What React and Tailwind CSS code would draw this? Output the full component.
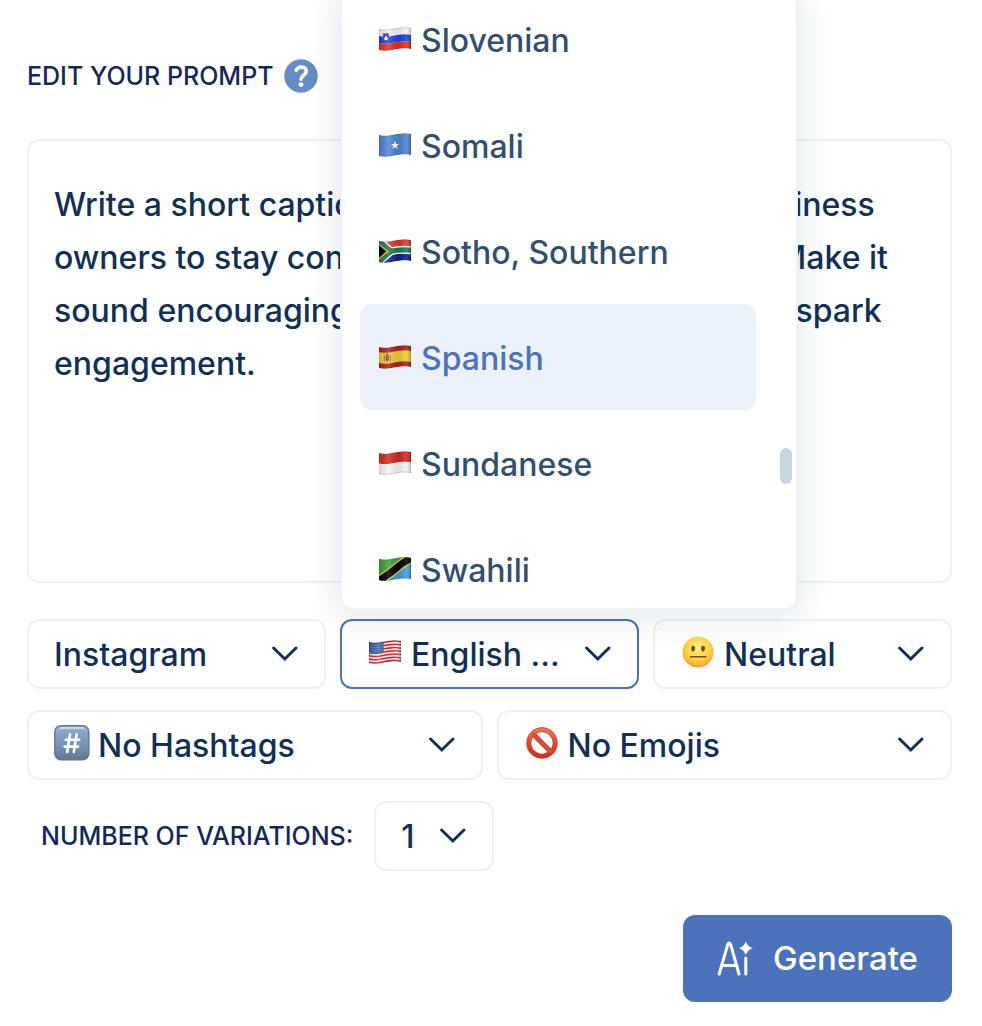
import { useId } from 'react'

const PROMPT = `Write a short caption that will motivate small business
owners to stay consistent with their marketing. Make it
sound encouraging, positive and inspirational to spark
engagement.`

// one horizontal band of a waving flag, between the heights a and b
const band = (a, b) =>
  `M0 ${a} C10 ${a + 3} 20 ${a - 4} 32 ${a - 1} V${b - 1} C20 ${b - 4} 10 ${b + 3} 0 ${b} Z`

function Flag({ children }) {
  const id = useId()
  return (
    <svg viewBox="0 0 32 24" className="w-8 h-6 shrink-0" aria-hidden="true">
      <defs>
        <clipPath id={`${id}c`}>
          <path d={band(2, 23)} />
        </clipPath>
        <linearGradient id={`${id}g`}>
          <stop offset="0" stopColor="#000" stopOpacity="0.12" />
          <stop offset="0.3" stopColor="#fff" stopOpacity="0.16" />
          <stop offset="0.62" stopColor="#000" stopOpacity="0.08" />
          <stop offset="0.85" stopColor="#fff" stopOpacity="0.12" />
          <stop offset="1" stopColor="#000" stopOpacity="0.22" />
        </linearGradient>
      </defs>
      <g clipPath={`url(#${id}c)`}>{children}</g>
      <path d={band(2, 23)} fill={`url(#${id}g)`} />
      <path d={band(2.3, 22.7)} fill="none" stroke="#000" strokeOpacity="0.2" strokeWidth="0.7" />
    </svg>
  )
}

function SloveniaFlag() {
  return (
    <Flag>
      <path d={band(2, 9)} fill="#f4f4f4" />
      <path d={band(9, 16)} fill="#1f3fe0" />
      <path d={band(16, 23)} fill="#e0301e" />
      <path d="M4.2 6.6 H9.8 V10 Q9.5 12.8 7 14 Q4.5 12.8 4.2 10 Z" fill="#1f3fc0" stroke="#d8304a" strokeWidth="0.5" />
      <path d="M4.8 12 L7 8.4 L9.2 12 L7 13.4 Z" fill="#fff" />
    </Flag>
  )
}

function SomaliaFlag() {
  return (
    <Flag>
      <path d={band(2, 23)} fill="#4f83d2" />
      <path d="M16 7.8 L17.1 10.9 H20.3 L17.7 12.8 L18.7 16 L16 14.1 L13.3 16 L14.3 12.8 L11.7 10.9 H14.9 Z" fill="#fff" />
    </Flag>
  )
}

function SouthAfricaFlag() {
  return (
    <Flag>
      <path d={band(2, 12.5)} fill="#d8392c" />
      <path d={band(12.5, 23)} fill="#101f8a" />
      <path d="M-1 1 L12 11.8 Q20 9.5 33 10.6 M-1 24 L12 12.8 Q20 10.5 33 11.8" fill="none" stroke="#fff" strokeWidth="7" />
      <path d="M-1 1.4 L12 12.3 L-1 23.6 M12 12.3 Q20 10 33 11.2" fill="none" stroke="#1d7a50" strokeWidth="5.2" />
      <path d="M-1 4.6 L8.6 12.4 L-1 20.4 Z" fill="#000" stroke="#f0b53a" strokeWidth="1.4" />
    </Flag>
  )
}

function SpainFlag() {
  return (
    <Flag>
      <path d={band(2, 23)} fill="#a8211f" />
      <path d={band(7, 18)} fill="#f3c934" />
      <path d="M6.6 10.6 H10 V14.6 Q9.8 16.4 8.3 16.8 Q6.8 16.4 6.6 14.6 Z" fill="#b8422f" />
      <path d="M6.8 9.4 Q8.3 7.4 9.8 9.4 V10.3 H6.8 Z" fill="#8d4a1b" />
      <path d="M5.3 10.2 V16.6 M11.3 10.2 V16.6" stroke="#9a6d4a" strokeWidth="1" />
      <circle cx="8.3" cy="13.6" r="0.9" fill="#4b4aa0" />
    </Flag>
  )
}

function IndonesiaFlag() {
  return (
    <Flag>
      <path d={band(2, 12.5)} fill="#cf2a20" />
      <path d={band(12.5, 23)} fill="#f6f6f6" />
    </Flag>
  )
}

function TanzaniaFlag() {
  return (
    <Flag>
      <path d="M0 0 H32 L0 24 Z" fill="#3f9d3c" />
      <path d="M32 0 V24 H0 Z" fill="#3d9bdc" />
      <path d="M-2 24.6 Q8 19 16 12 T34 0.4" fill="none" stroke="#f3cf2e" strokeWidth="9.6" />
      <path d="M-2 24.6 Q8 19 16 12 T34 0.4" fill="none" stroke="#000" strokeWidth="7" />
    </Flag>
  )
}

function UsaFlag() {
  return (
    <Flag>
      <path d={band(2, 23)} fill="#f7f1f1" />
      {[0, 1, 2, 3, 4, 5, 6].map((i) => (
        <path key={i} d={band(2 + i * 3.23, 3.62 + i * 3.23)} fill="#cc2434" />
      ))}
      <path d="M0 2 C5 3.5 10 2.4 14.5 1 V12.4 C10 13.9 5 14.8 0 13.3 Z" fill="#2f5aa0" />
      <path
        d="M1.5 5 Q7 6 14 4 M1.5 7.3 Q7 8.3 14 6.3 M1.5 9.6 Q7 10.6 14 8.6 M1.5 11.9 Q7 12.9 14 10.9"
        fill="none"
        stroke="#c9d6ee"
        strokeWidth="0.7"
        strokeDasharray="0.8 1.3"
      />
    </Flag>
  )
}

function NeutralFace() {
  return (
    <svg viewBox="0 0 33 33" className="w-8 h-8 shrink-0" aria-hidden="true">
      <defs>
        <radialGradient id="face" cx="0.5" cy="0.36" r="0.66">
          <stop offset="0" stopColor="#fff28a" />
          <stop offset="0.55" stopColor="#fdd54a" />
          <stop offset="0.85" stopColor="#f5b133" />
          <stop offset="1" stopColor="#e8962a" />
        </radialGradient>
      </defs>
      <circle cx="16.5" cy="16.5" r="16" fill="url(#face)" />
      <ellipse cx="11.5" cy="13" rx="2" ry="2.9" fill="#7a4a14" />
      <ellipse cx="21.7" cy="13" rx="2" ry="2.9" fill="#7a4a14" />
      <path d="M8.8 21.4 H24.4" stroke="#7a4a14" strokeWidth="1.8" strokeLinecap="round" />
    </svg>
  )
}

function HashKey() {
  return (
    <svg viewBox="0 0 36 36" className="w-9 h-9 shrink-0" aria-hidden="true">
      <defs>
        <linearGradient id="keycap" x1="0" y1="0" x2="0" y2="1">
          <stop offset="0" stopColor="#a9bdd6" />
          <stop offset="0.2" stopColor="#86a3c8" />
          <stop offset="0.6" stopColor="#7890b0" />
          <stop offset="1" stopColor="#64758e" />
        </linearGradient>
      </defs>
      <rect x="0.8" y="0.8" width="34" height="34" rx="6" fill="url(#keycap)" stroke="#5f7696" strokeWidth="1.4" />
      <path d="M6 3 H30" stroke="#d4dfed" strokeWidth="1.4" strokeLinecap="round" />
      <path
        d="M16 9.4 L13.2 27 M22.6 9.4 L19.8 27 M11.8 14.7 H25.2 M10.6 21.6 H24"
        stroke="#fff"
        strokeWidth="2.6"
        strokeLinecap="round"
      />
    </svg>
  )
}

function Prohibited() {
  return (
    <svg viewBox="0 0 32 32" className="w-8 h-8 shrink-0" aria-hidden="true">
      <defs>
        <linearGradient id="ban" x1="0" y1="0" x2="0" y2="1">
          <stop offset="0" stopColor="#e8705a" />
          <stop offset="0.5" stopColor="#dc4a34" />
          <stop offset="1" stopColor="#cf3418" />
        </linearGradient>
      </defs>
      <g fill="none">
        <circle cx="16" cy="16" r="13.2" stroke="#b93a26" strokeWidth="5" />
        <path d="M7 7 L25 25" stroke="#b93a26" strokeWidth="5" />
        <circle cx="16" cy="16" r="13.2" stroke="url(#ban)" strokeWidth="3.8" />
        <path d="M6.6 6.6 L25.4 25.4" stroke="#dd5038" strokeWidth="3.8" />
      </g>
    </svg>
  )
}

function Chevron() {
  return (
    <svg viewBox="0 0 26 16" className="w-[26px] h-4 shrink-0 pointer-events-none" fill="none" aria-hidden="true">
      <path d="M1.6 2 L12.8 13 L24 2" stroke="#132f55" strokeWidth="3" strokeLinecap="round" />
    </svg>
  )
}

function HelpIcon() {
  return (
    <svg viewBox="0 0 34 34" className="w-[34px] h-[34px]" fill="none" aria-hidden="true">
      <circle cx="17" cy="17" r="16.7" fill="#668bc7" />
      <path
        d="M12.2 11.2 C13.6 8.8 15.4 8 17.4 8 C20.2 8 22.3 9.8 22.3 12.3 C22.3 16 17 16.2 17 20.2"
        stroke="#fff"
        strokeWidth="3.6"
        strokeLinecap="round"
      />
      <circle cx="17" cy="25.6" r="2.4" fill="#fff" />
    </svg>
  )
}

function AiIcon() {
  return (
    <svg viewBox="0 0 36 36" className="w-9 h-9 shrink-0" fill="none" aria-hidden="true">
      <path
        d="M2.2 33 L10.8 3.4 Q12.2 0.8 13.6 3.4 L22 33 M5.4 24.4 H18.8 M28.8 17 V33"
        stroke="#fff"
        strokeWidth="3"
        strokeLinecap="round"
        strokeLinejoin="round"
      />
      <path d="M28.8 0.4 Q30.6 5.4 35.6 7.2 Q30.6 9 28.8 14 Q27 9 22 7.2 Q27 5.4 28.8 0.4 Z" fill="#fff" />
    </svg>
  )
}

const LANGUAGES = [
  { name: 'Slovenian', Icon: SloveniaFlag },
  { name: 'Somali', Icon: SomaliaFlag },
  { name: 'Sotho, Southern', Icon: SouthAfricaFlag },
  { name: 'Spanish', Icon: SpainFlag },
  { name: 'Sundanese', Icon: IndonesiaFlag },
  { name: 'Swahili', Icon: TanzaniaFlag },
]

function Field({ label, value, icon, active }) {
  return (
    <label
      className={`flex items-center gap-2 h-[70px] pl-[25px] pr-[26px] rounded-xl border-2 ${
        active ? 'border-[#4b72bb]' : 'border-[#f0f1f6]'
      }`}
    >
      {icon ? <span className="-mt-1 min-w-9 flex justify-center">{icon}</span> : null}
      <select
        aria-label={label}
        className="appearance-none flex-1 min-w-0 pt-0.5 bg-transparent outline-none text-[32px] text-[#132f55] font-medium"
      >
        <option>{value}</option>
      </select>
      <Chevron />
    </label>
  )
}

function LanguageMenu({ hovered }) {
  return (
    <div className="absolute bottom-full left-0 mb-[9px] w-[458px] h-[624px] flex overflow-hidden rounded-xl border-2 border-t-0 border-[#f0f1f6] bg-white pl-[18px] pr-1 shadow-[0_6px_36px_rgba(20,35,50,0.12)]">
      <ul role="listbox" aria-label="Language options" className="flex-1">
        {LANGUAGES.map(({ name, Icon }) => (
          <li
            key={name}
            role="option"
            aria-selected={name === hovered}
            className={`flex items-center h-[106px] gap-2.5 pt-[3px] px-[19px] rounded-xl text-[32px] font-medium ${
              name === hovered ? 'bg-[#ecf1fa] text-[#4b72bb]' : 'text-[#344e6f]'
            }`}
          >
            <span className="-mt-1">
              <Icon />
            </span>
            {name}
          </li>
        ))}
      </ul>
      <div className="ml-6 mt-[462px] w-3 h-9 rounded-full bg-[#c9d5e1]" />
    </div>
  )
}

export default function App() {
  return (
    <main className="min-h-screen bg-white pl-[27px] pr-[30px] pt-[58px] pb-6 font-['Inter',sans-serif] font-medium text-[#132f55]">
      <div className="flex items-center gap-2.5">
        <label htmlFor="prompt" className="text-[25px] leading-9 text-[#15275a]">
          EDIT YOUR PROMPT
        </label>
        <button type="button" aria-label="Help">
          <HelpIcon />
        </button>
      </div>

      <textarea
        id="prompt"
        defaultValue={PROMPT}
        className="block mt-[45px] w-full h-[444px] resize-none whitespace-pre overflow-hidden rounded-xl border-2 border-[#f0f1f6] px-[25px] pt-[37px] text-[32px] leading-[53px] outline-none"
      />

      <div className="mt-9 grid grid-cols-3 gap-3.5">
        <Field label="Platform" value="Instagram" />
        <div className="relative">
          <Field label="Language" value="English ..." icon={<UsaFlag />} active />
          <LanguageMenu hovered="Spanish" />
        </div>
        <Field label="Tone" value="Neutral" icon={<NeutralFace />} />
      </div>

      <div className="mt-[21px] grid grid-cols-2 gap-3.5">
        <Field label="Hashtags" value="No Hashtags" icon={<HashKey />} />
        <Field label="Emojis" value="No Emojis" icon={<Prohibited />} />
      </div>

      <div className="mt-[21px] ml-3.5 flex items-center gap-[21px]">
        <span className="pt-0.5 text-[25px] text-[#15275a]">NUMBER OF VARIATIONS:</span>
        <div className="w-[120px]">
          <Field label="Number of variations" value="1" />
        </div>
      </div>

      <div className="mt-11 flex justify-end">
        <button
          type="button"
          className="flex items-center gap-5 h-[87px] px-[34px] rounded-xl bg-[#4b72bb] text-[33px] text-white"
        >
          <AiIcon />
          Generate
        </button>
      </div>
    </main>
  )
}
